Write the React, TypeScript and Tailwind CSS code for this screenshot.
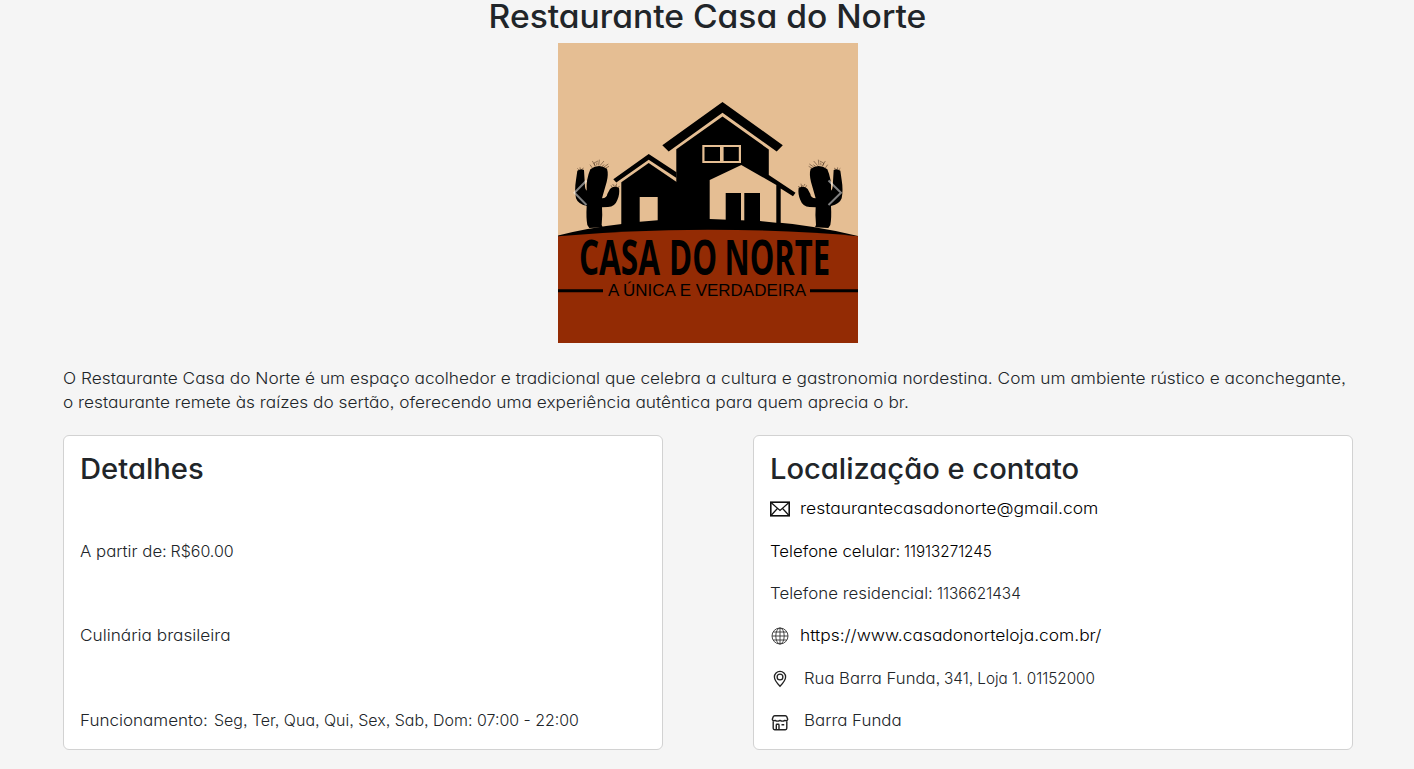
import React from "react";

const CACTUS =
  "M97 238 Q122 219 147 236 Q152 252 146 276 L132 325 Q147 324 148 312 L156 297 Q166 286 183 293 Q186 312 178 330 Q171 350 150 351 L132 352 Q134 375 131 405 L134 412 L94 414 L88 405 Q84 385 86 348 Q60 342 54 325 Q49 300 54 270 L58 242 Q68 234 78 240 L81 290 Q82 300 86 302 Q84 268 97 238Z";
const SPINES =
  "M103 234L96 224M112 228L103 213M116 226L117 218M122 226L124 209M126 227L138 213M132 229L139 224M138 231L151 222M110 227L108 219L120 213M142 235L153 229M63 240L58 235M67 238L66 232M71 238L77 234M163 293L159 286M169 290L164 282M174 290L176 281M179 292L185 289M181 295L170 286";

function Cactus() {
  return (
    <g>
      <path d={CACTUS} />
      <path d={SPINES} stroke="#3a2415" strokeWidth="1.5" fill="none" />
    </g>
  );
}

function Logo() {
  return (
    <svg viewBox="0 0 300 300" className="block h-[300px] w-[300px]">
      <rect width="300" height="300" fill="#e5be93" />
      <path d="M0 192.5 Q60 177 151 175.5 Q235 177 300 193 V215 H0Z" />
      <path d="M0 193.3 Q70 187 150 186.8 Q240 187 300 193.3 V300 H0Z" fill="#932b04" />
      <path d="M55.3 136.3L90.7 111L118.5 129.3V135L90.7 116.8L58.3 139.5Z" />
      <path d="M63.3 139.3L90.7 120L118.3 138.7L121 141V185H63.3Z" />
      <path d="M81.7 154H99.7V177.3L81.7 178.7Z" fill="#e5be93" />
      <path d="M104.3 102.3L164.5 59L224.8 102.3L218.7 108.5L164.5 69.8L110.7 108.5Z" />
      <path d="M118.3 106.2L164.5 73.5L210.8 106.5V132L237.5 149.7L235 153.3L222.7 145.5V182H118.3Z" />
      <path d="M151.7 137L183.3 122L218.3 142V179.8L202 178L151.7 176Z" fill="#e5be93" />
      <path d="M167.7 150H183V178H167.7ZM186.3 150H202V180H186.3Z" />
      <path d="M144.3 102H183V120H144.3Z" fill="#e5be93" />
      <path d="M146.5 104H162V118H146.5ZM165.6 104H180.8V118H165.6Z" />
      <g transform="translate(0 47) scale(.33333)">
        <Cactus />
      </g>
      <g transform="translate(301.67 47) scale(-.33333 .33333)">
        <Cactus />
      </g>
      <path d="M0 247.7H45M252 247.7H300" stroke="#000" strokeWidth="3" />
      <g fontFamily="Open Sans, sans-serif" fontWeight="680" fontSize="48.5">
        <text x="21" y="231.6" textLength="81" lengthAdjust="spacingAndGlyphs">CASA</text>
        <text x="111" y="231.6" textLength="48" lengthAdjust="spacingAndGlyphs">DO</text>
        <text x="166.5" y="231.6" textLength="105.5" lengthAdjust="spacingAndGlyphs">NORTE</text>
      </g>
      <text x="50" y="253.2" fontFamily="Liberation Sans, sans-serif" fontSize="15.6" textLength="198" lengthAdjust="spacingAndGlyphs">
        A ÚNICA E VERDADEIRA
      </text>
      <path d="M28.5 137.5L16.5 149.8L28.5 162M270.5 137.5L283 149.8L270.5 162" fill="none" stroke="#fff" strokeOpacity=".5" strokeWidth="2" />
    </svg>
  );
}

function MailIcon() {
  return (
    <svg viewBox="0 0 20 20" className="h-5 w-5" fill="none" stroke="#111">
      <rect x=".8" y="3.2" width="18.4" height="13.6" strokeWidth="1.6" />
      <path d="M1 3.5L10 11.5L19 3.5M1 16.5L7.4 9.5M19 16.5L12.6 9.5" strokeWidth="1.2" />
    </svg>
  );
}

function GlobeIcon() {
  return (
    <svg viewBox="0 0 20 20" className="h-5 w-5" fill="none" stroke="#333" strokeWidth=".9">
      <circle cx="10" cy="10" r="8" />
      <ellipse cx="10" cy="10" rx="4.2" ry="8" />
      <path d="M10 2V18M2 10H18M3.2 6H16.8M3.2 14H16.8" />
    </svg>
  );
}

function PinIcon() {
  return (
    <svg viewBox="0 0 20 20" className="h-5 w-5" fill="none" stroke="#222" strokeWidth="1.3">
      <path d="M10 17.3C8 15.2 4.4 11.4 4.4 8A5.6 5.6 0 0 1 15.6 8C15.6 11.4 12 15.2 10 17.3Z" />
      <circle cx="10" cy="8" r="2.9" />
    </svg>
  );
}

function StoreIcon() {
  return (
    <svg viewBox="0 0 20 20" className="h-5 w-5" fill="none" stroke="#222" strokeWidth="1.4" strokeLinejoin="round">
      <path d="M4.6 4.7H15.4Q16.4 4.7 16.8 5.8L17.7 8.3Q17 10.5 14.9 9.4Q12.5 10.9 10 9.4Q7.5 10.9 5.1 9.4Q3 10.5 2.3 8.3L3.2 5.8Q3.6 4.7 4.6 4.7Z" />
      <path d="M3.2 10.3V17.3Q3.2 18.7 4.6 18.7H15.4Q16.8 18.7 16.8 17.3V10.3M6.3 18.5V13.9Q6.3 13.3 7 13.3H8.3Q9 13.3 9 13.9V18.5M11.5 13.7H14.2" />
    </svg>
  );
}

const row = "flex h-[42.4px] items-center whitespace-nowrap";
const fit = "inline-block origin-left whitespace-nowrap";
const cell = "inline-block origin-left whitespace-nowrap pb-[2px]";

export default function App() {
  return (
    <main className="h-[769px] overflow-hidden bg-[#f5f5f5] font-['Inter',sans-serif] text-[16px] font-light leading-6 text-[#212529] [font-feature-settings:'cv11','ss03']">
      <h1 className="ml-[1px] flex h-[35px] items-start justify-center text-[32px] font-medium leading-[34px]">
        <span className="inline-block scale-x-[1.05] whitespace-nowrap">Restaurante Casa do Norte</span>
      </h1>
      <div className="mt-2 ml-[558px] w-[300px]">
        <Logo />
      </div>
      <div className="mt-[23px] ml-[62.5px] flex flex-col items-start">
        <p className={`${fit} scale-x-[1.08]`}>O Restaurante Casa do Norte é um espaço acolhedor e tradicional que celebra a cultura e gastronomia nordestina. Com um ambiente rústico e aconchegante,</p>
        <p className={`${fit} scale-x-[1.079]`}>o restaurante remete às raízes do sertão, oferecendo uma experiência autêntica para quem aprecia o br.</p>
      </div>
      <div className="mt-[21px] ml-[63px] flex gap-[90px]">
        <section className="h-[315px] w-[600px] rounded-md border border-[#d2d2d2] bg-white px-[15.5px] py-4">
          <h2 className="h-9 text-[28px] font-medium leading-[34px]"><span className={`${fit} scale-x-[1.043]`}>Detalhes</span></h2>
          <p className={`${row} mt-[42.4px]`}>
            <span className={`${cell} w-[91px] scale-x-[1.05]`}>A partir de:</span>
            <span className={cell}>R$60.00</span>
          </p>
          <p className={`${row} mt-[42.4px]`}><span className={`${cell} scale-x-[1.076]`}>Culinária brasileira</span></p>
          <p className={`${row} mt-[42.4px]`}>
            <span className={`${cell} w-[134px] scale-x-[1.064]`}>Funcionamento:</span>
            <span className={`${cell} w-[263.5px] scale-x-[0.998]`}>Seg, Ter, Qua, Qui, Sex, Sab, Dom:</span>
            <span className={`${cell} scale-x-[0.995]`}>07:00 - 22:00</span>
          </p>
        </section>
        <section className="h-[315px] w-[600px] rounded-md border border-[#d2d2d2] bg-white p-4">
          <h2 className="h-9 text-[28px] font-medium leading-[34px]"><span className={`${fit} scale-x-[1.04]`}>Localização e contato</span></h2>
          <p className={`${row} gap-[10px] text-black`}><MailIcon /><span className={`${cell} scale-x-[1.094]`}>restaurantecasadonorte@gmail.com</span></p>
          <p className={`${row} text-black`}>
            <span className={`${cell} w-[134px] scale-x-[1.05]`}>Telefone celular:</span>
            <span className={`${cell} scale-x-[0.95]`}>11913271245</span>
          </p>
          <p className={row}>
            <span className={`${cell} w-[167px] scale-x-[1.053]`}>Telefone residencial:</span>
            <span className={`${cell} scale-x-[0.958]`}>1136621434</span>
          </p>
          <p className={`${row} gap-[10px] text-black`}><GlobeIcon /><span className={`${cell} scale-x-[1.086]`}>https://www.casadonorteloja.com.br/</span></p>
          <p className={`${row} gap-[14px]`}>
            <PinIcon />
            <span className="flex">
              <span className={`${cell} w-[140px] scale-x-[1.042]`}>Rua Barra Funda,</span>
              <span className={`${cell} scale-x-[0.956]`}>341, Loja 1. 01152000</span>
            </span>
          </p>
          <p className={`${row} gap-[14px]`}><StoreIcon /><span className={`${cell} scale-x-[1.056]`}>Barra Funda</span></p>
        </section>
      </div>
    </main>
  );
}
